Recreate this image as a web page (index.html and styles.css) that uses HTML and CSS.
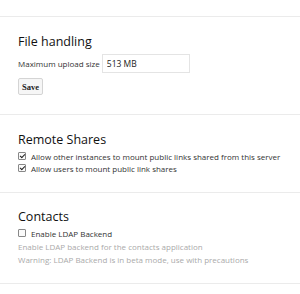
FILE: index.html
```html
<!DOCTYPE html>
<html>
	<head>
		<meta charset="utf-8">
		<title>Admin</title>
		<link rel="stylesheet" href="styles.css">
	</head>
	<body>
		<div class="top"></div>

		<div class="section files">
			<h2>File handling</h2>
			<div class="row">
				<label for="maxUpload">Maximum upload size</label>
				<input id="maxUpload" type="text" value="513 MB">
			</div>
			<button class="save">Save</button>
		</div>

		<div class="section shares">
			<h2>Remote Shares</h2>
			<div class="check"><input type="checkbox" checked><span>Allow other instances to mount public links shared from this server</span></div>
			<div class="check"><input type="checkbox" checked><span>Allow users to mount public link shares</span></div>
		</div>

		<div class="section contacts">
			<h2>Contacts</h2>
			<div class="check"><input type="checkbox"><span>Enable LDAP Backend</span></div>
			<p class="hint">Enable LDAP backend for the contacts application</p>
			<p class="hint">Warning: LDAP Backend is in beta mode, use with precautions</p>
		</div>
	</body>
</html>
```

FILE: styles.css
```css
body {
	margin: 0;
	background: #fff;
	font-family: 'Open Sans', sans-serif;
	font-size: 8px;
	color: #222;
}

.top {
	height: 16px;
	border-bottom: 1px solid #ebebeb;
}

.section {
	box-sizing: border-box;
	padding: 15px 18px 0 18px;
	border-bottom: 1px solid #ebebeb;
}

.files {
	height: 98px;
}

.shares {
	height: 78px;
}

.contacts {
	height: 91px;
	padding-top: 14px;
}

h2 {
	margin: 0;
	font-size: 12.5px;
	font-weight: normal;
	color: #111;
	line-height: 20px;
}

.row {
	display: flex;
	align-items: center;
	gap: 2px;
	margin-top: 2px;
}

.row label {
	color: #333;
}

.row input {
	width: 88px;
	height: 19px;
	box-sizing: border-box;
	border: 1px solid #e4e4e4;
	padding: 0 4px;
	font: inherit;
	font-size: 8.5px;
	color: #222;
	background: #fff;
	outline: none;
}

.save {
	display: block;
	margin-top: 5px;
	width: 25px;
	height: 17px;
	padding: 0;
	font-family: 'Liberation Serif', serif;
	font-weight: bold;
	font-size: 8.5px;
	color: #222;
	background: #f6f6f6;
	border: 1px solid #d4d4d4;
	border-radius: 2px;
}

.check {
	display: flex;
	align-items: center;
	height: 12px;
	color: #333;
	white-space: nowrap;
}

.check input {
	-webkit-appearance: none;
	appearance: none;
	position: relative;
	box-sizing: border-box;
	width: 8px;
	height: 8px;
	margin: 0 5px 0 0;
	border: 1px solid #888;
	border-radius: 1px;
	background: #fafafa;
}

.check input:checked::after {
	content: "";
	position: absolute;
	left: 1.5px;
	top: 0;
	width: 2px;
	height: 4px;
	border: solid #222;
	border-width: 0 1.5px 1.5px 0;
	transform: rotate(45deg);
}

.contacts .check {
	margin: 0 0 1px 0;
}

.hint {
	margin: 0;
	line-height: 13px;
	color: #aaa;
}
```
